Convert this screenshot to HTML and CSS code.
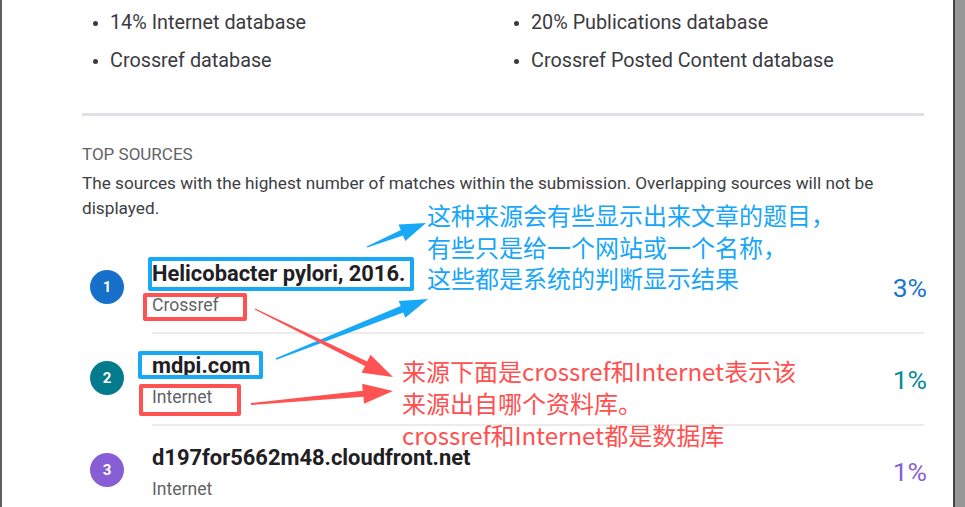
FILE: index.html
```html
<!DOCTYPE html>
<html lang="zh-CN">
<head>
<meta charset="utf-8">
<title>Top sources</title>
<link rel="stylesheet" href="styles.css">
</head>
<body>
<main class="page">
  <ul class="databases">
    <li>14% Internet database</li>
    <li>20% Publications database</li>
    <li>Crossref database</li>
    <li>Crossref Posted Content database</li>
  </ul>

  <section class="top-sources">
    <h2 class="section-title">TOP SOURCES</h2>
    <p class="section-desc">The sources with the highest number of matches within the submission. Overlapping sources will not be displayed.</p>

    <ol class="sources">
      <li class="source">
        <span class="rank rank-blue">1</span>
        <div class="source-body">
          <div class="source-text">
            <div class="source-title">Helicobacter pylori, 2016.</div>
            <div class="source-kind">Crossref</div>
          </div>
          <span class="source-pct pct-blue">3%</span>
        </div>
      </li>
      <li class="source">
        <span class="rank rank-teal">2</span>
        <div class="source-body">
          <div class="source-text">
            <div class="source-title">mdpi.com</div>
            <div class="source-kind">Internet</div>
          </div>
          <span class="source-pct pct-teal">1%</span>
        </div>
      </li>
      <li class="source">
        <span class="rank rank-purple">3</span>
        <div class="source-body">
          <div class="source-text">
            <div class="source-title">d197for5662m48.cloudfront.net</div>
            <div class="source-kind">Internet</div>
          </div>
          <span class="source-pct pct-purple">1%</span>
        </div>
      </li>
    </ol>
  </section>
</main>

<!-- hand-drawn notes layered over the report -->
<div class="notes">
  <span class="mark mark-blue mark-title1"></span>
  <span class="mark mark-red mark-kind1"></span>
  <span class="mark mark-blue mark-title2"></span>
  <span class="mark mark-red mark-kind2"></span>

  <svg class="arrows" width="965" height="507" viewBox="0 0 965 507">
    <polygon class="arrow-blue" points="367.3,247.6 403.0,235.6 405.3,241.1 426,223 398.5,224.5 400.8,230.0 366.7,246.4"/>
    <polygon class="arrow-blue" points="276.3,359.7 403.3,312.6 405.3,317.7 428,299 398.7,300.9 400.7,306.0 275.7,358.3"/>
    <polygon class="arrow-red" points="254.7,309.6 365.0,365.9 361.7,372.7 393,377 370.5,354.7 367.2,361.5 255.3,308.4"/>
    <polygon class="arrow-red" points="251.1,405.0 363.4,396.7 364.0,403.7 393,391 362.2,383.7 362.8,390.7 250.9,403.0"/>
  </svg>

  <p class="note note-blue">这种来源会有些显示出来文章的题目，<br>有些只是给一个网站或一个名称，<br>这些都是系统的判断显示结果</p>
  <p class="note note-red">来源下面是crossref和Internet表示该<br>来源出自哪个资料库。<br>crossref和Internet都是数据库</p>
</div>
</body>
</html>
```

FILE: styles.css
```css
html, body {
  margin: 0;
  height: 100%;
  overflow: hidden;
}

body {
  position: relative;
  display: flex;
  background: #979797;
  font-family: Roboto, "Liberation Sans", Arial, sans-serif;
}

/* report sheet */
.page {
  box-sizing: border-box;
  width: 955px;
  height: 100%;
  padding: 9px 29px 0 80px;
  background: #ffffff;
  border-left: 2px solid #5e5e5e;
  border-right: 2px solid #444444;
}

/* database summary bullets */
.databases {
  display: grid;
  grid-template-columns: 1fr 1fr;
  row-gap: 10px;
  margin: 0;
  padding: 0 0 38px;
  list-style: none;
  border-bottom: 3px solid #dfdfe4;
}

.databases li {
  position: relative;
  padding-left: 28px;
  font-size: 19.8px;
  line-height: 28px;
  color: #3a3b42;
}

.databases li::before {
  content: "";
  position: absolute;
  left: 11px;
  top: 12px;
  width: 5px;
  height: 5px;
  border-radius: 50%;
  background: #3a3b42;
}

/* top sources */
.top-sources {
  padding-top: 28px;
}

.section-title {
  margin: 0;
  font-size: 17px;
  font-weight: 400;
  line-height: 20px;
  color: #5f6368;
}

.section-desc {
  margin: 7px 0 0;
  font-size: 17.2px;
  line-height: 25px;
  color: #3c4043;
}

.sources {
  margin: 21px 0 0;
  padding: 0;
  list-style: none;
}

.source {
  display: flex;
  align-items: center;
  gap: 28px;
  padding-left: 8px;
}

.rank {
  flex: none;
  width: 34px;
  height: 34px;
  border-radius: 50%;
  display: flex;
  align-items: center;
  justify-content: center;
  color: #ffffff;
  font-size: 15px;
  font-weight: 700;
}

.rank-blue { background: #1670c9; }
.rank-teal { background: #047b8c; }
.rank-purple { background: #875ed3; }

.source-body {
  flex: 1;
  display: flex;
  align-items: center;
  justify-content: space-between;
  padding: 18px 0 15px;
  border-top: 2px solid #ebebeb;
}

.source:first-child .source-body {
  border-top: 0;
}

.source-title {
  font-size: 21.9px;
  font-weight: 700;
  line-height: 28px;
  color: #1f2024;
}

.source-kind {
  margin-top: 5px;
  font-size: 17.6px;
  line-height: 24px;
  color: #5f6368;
}

.source-pct {
  margin: -2px -3px 0 0;
  font-size: 26.5px;
  line-height: 28px;
}

.pct-blue { color: #1a74d0; }
.pct-teal { color: #05899a; }
.pct-purple { color: #8a5fd6; }

/* annotation layer */
.notes {
  position: absolute;
  inset: 0;
  pointer-events: none;
}

.mark {
  position: absolute;
  box-sizing: border-box;
  border: 4px solid;
  border-radius: 2px;
}

.mark-blue { border-color: #17a8f6; }
.mark-red { border-color: #ff5252; }

.mark-title1 { left: 148px; top: 257px; width: 266px; height: 34px; }
.mark-kind1 { left: 143px; top: 293px; width: 104px; height: 28px; }
.mark-title2 { left: 138px; top: 351px; width: 125px; height: 28px; }
.mark-kind2 { left: 139px; top: 384px; width: 102px; height: 32px; }

.arrows {
  position: absolute;
  left: 0;
  top: 0;
}

.arrow-blue { fill: #17a8f6; }
.arrow-red { fill: #ff5252; }

.note {
  position: absolute;
  margin: 0;
  font-family: "Noto Sans CJK SC", "Microsoft YaHei", sans-serif;
  font-size: 24px;
  white-space: nowrap;
}

.note-blue {
  left: 427px;
  top: 199px;
  line-height: 31.5px;
  color: #18a6f8;
}

.note-red {
  left: 402px;
  top: 355px;
  line-height: 32px;
  color: #ff4f4f;
}
```
